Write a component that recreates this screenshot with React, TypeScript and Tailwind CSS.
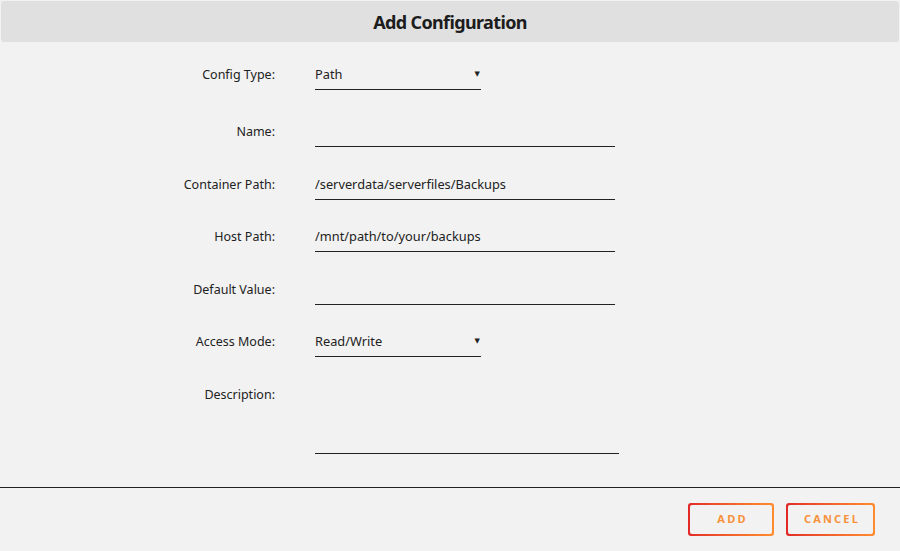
const rows = [
  { label: "Config Type:", value: "Path", kind: "select", mt: "mt-[17px]" },
  { label: "Name:", value: "", kind: "text", mt: "mt-[26px]" },
  { label: "Container Path:", value: "/serverdata/serverfiles/Backups", kind: "text", mt: "mt-[22px]" },
  { label: "Host Path:", value: "/mnt/path/to/your/backups", kind: "text", mt: "mt-[21px]" },
  { label: "Default Value:", value: "", kind: "text", mt: "mt-[22px]" },
  { label: "Access Mode:", value: "Read/Write", kind: "select", mt: "mt-[21px]" },
];

function GradientButton({ label, width }: { label: string; width: string }) {
  return (
    <button
      className={`${width} h-[33px] rounded-[3px] bg-gradient-to-r from-[#e22828] to-[#ff8c2f] p-[2px]`}
    >
      <span className="flex h-full w-full items-center justify-center rounded-[2px] bg-[#f2f2f2] pl-[3px] text-[11px] font-bold tracking-[0.2em] text-[#f7913a]">
        {label}
      </span>
    </button>
  );
}

export default function App() {
  return (
    <div
      className="flex h-[551px] w-[900px] flex-col bg-[#f2f2f2] text-[#222]"
      style={{ fontFamily: '"Noto Sans", "DejaVu Sans", sans-serif' }}
    >
      <div className="mx-px mt-px flex h-[41px] items-center justify-center rounded-[3px] bg-[#e0e0e0] pt-[2px]">
        <h1 className="text-[18px] font-bold tracking-[-0.035em] text-[#1c1c1c]">Add Configuration</h1>
      </div>

      <form className="flex flex-col">
        {rows.map((row) => (
          <div key={row.label} className={`flex items-start ${row.mt}`}>
            <label className="flex h-[31px] w-[275px] items-center justify-end pt-[1px] text-[12.5px]">{row.label}</label>
            {row.kind === "select" ? (
              <div className="ml-[40px] flex h-[31px] w-[166px] items-center justify-between border-b border-[#222] pr-[1px] pt-[1px] text-[12.8px]">
                <span>{row.value}</span>
                <span className="text-[7px]">▼</span>
              </div>
            ) : (
              <div className="ml-[40px] flex h-[31px] w-[300px] items-center border-b border-[#222] pt-[1px] text-[12.8px]">
                {row.value}
              </div>
            )}
          </div>
        ))}
        <div className="mt-[22px] flex items-start">
          <label className="flex h-[31px] w-[275px] items-center justify-end pt-[1px] text-[12.5px]">Description:</label>
          <div className="ml-[40px] h-[75px] w-[304px] border-b border-[#222]" />
        </div>
      </form>

      <div className="mt-[33px] flex justify-end gap-[12px] border-t border-[#222] pr-[25px] pt-[15px]">
        <GradientButton label="ADD" width="w-[86px]" />
        <GradientButton label="CANCEL" width="w-[89px]" />
      </div>
    </div>
  );
}
